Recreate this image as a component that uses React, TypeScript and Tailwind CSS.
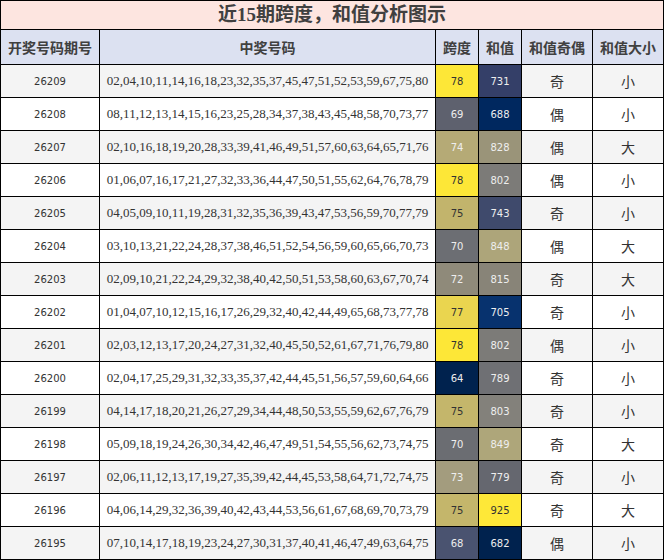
import React from "react";

type Row = {
  period: string;
  nums: string;
  span: number;
  spanCls: string;
  sum: number;
  sumCls: string;
  oe: string;
  bs: string;
};

const DARK = "text-[#333333]";
const LIGHT = "text-[#eeeeee]";

const rows: Row[] = [
  { period: "26209", nums: "02,04,10,11,14,16,18,23,32,35,37,45,47,51,52,53,59,67,75,80", span: 78, spanCls: "bg-[#fde737] text-[#333333]", sum: 731, sumCls: "bg-[#343f68] text-[#eeeeee]", oe: "奇", bs: "小" },
  { period: "26208", nums: "08,11,12,13,14,15,16,23,25,28,34,37,38,43,45,48,58,70,73,77", span: 69, spanCls: "bg-[#5e616e] text-[#eeeeee]", sum: 688, sumCls: "bg-[#00285f] text-[#eeeeee]", oe: "偶", bs: "小" },
  { period: "26207", nums: "02,10,16,18,19,20,28,33,39,41,46,49,51,57,60,63,64,65,71,76", span: 74, spanCls: "bg-[#b5aa76] text-[#eeeeee]", sum: 828, sumCls: "bg-[#9a9479] text-[#eeeeee]", oe: "偶", bs: "大" },
  { period: "26206", nums: "01,06,07,16,17,21,27,32,33,36,44,47,50,51,55,62,64,76,78,79", span: 78, spanCls: "bg-[#fde737] text-[#333333]", sum: 802, sumCls: "bg-[#7c7b78] text-[#eeeeee]", oe: "偶", bs: "小" },
  { period: "26205", nums: "04,05,09,10,11,19,28,31,32,35,36,39,43,47,53,56,59,70,77,79", span: 75, spanCls: "bg-[#c2b46c] text-[#333333]", sum: 743, sumCls: "bg-[#3f4a6c] text-[#eeeeee]", oe: "奇", bs: "小" },
  { period: "26204", nums: "03,10,13,21,22,24,28,37,38,46,51,52,54,56,59,60,65,66,70,73", span: 70, spanCls: "bg-[#6c6e73] text-[#eeeeee]", sum: 848, sumCls: "bg-[#ada57a] text-[#eeeeee]", oe: "偶", bs: "大" },
  { period: "26203", nums: "02,09,10,21,22,24,29,32,38,40,42,50,51,53,58,60,63,67,70,74", span: 72, spanCls: "bg-[#8f8a7a] text-[#eeeeee]", sum: 815, sumCls: "bg-[#888478] text-[#eeeeee]", oe: "奇", bs: "大" },
  { period: "26202", nums: "01,04,07,10,12,15,16,17,26,29,32,40,42,44,49,65,68,73,77,78", span: 77, spanCls: "bg-[#ead54f] text-[#333333]", sum: 705, sumCls: "bg-[#07326e] text-[#eeeeee]", oe: "奇", bs: "小" },
  { period: "26201", nums: "02,03,12,13,17,20,24,27,31,32,40,45,50,52,61,67,71,76,79,80", span: 78, spanCls: "bg-[#fde737] text-[#333333]", sum: 802, sumCls: "bg-[#7c7b78] text-[#eeeeee]", oe: "偶", bs: "小" },
  { period: "26200", nums: "02,04,17,25,29,31,32,33,35,37,42,44,45,51,56,57,59,60,64,66", span: 64, spanCls: "bg-[#00224e] text-[#eeeeee]", sum: 789, sumCls: "bg-[#6f7074] text-[#eeeeee]", oe: "奇", bs: "小" },
  { period: "26199", nums: "04,14,17,18,20,21,26,27,29,34,44,48,50,53,55,59,62,67,76,79", span: 75, spanCls: "bg-[#c4b66b] text-[#333333]", sum: 803, sumCls: "bg-[#83817b] text-[#eeeeee]", oe: "奇", bs: "小" },
  { period: "26198", nums: "05,09,18,19,24,26,30,34,42,46,47,49,51,54,55,56,62,73,74,75", span: 70, spanCls: "bg-[#6b6d72] text-[#eeeeee]", sum: 849, sumCls: "bg-[#aea67a] text-[#eeeeee]", oe: "奇", bs: "大" },
  { period: "26197", nums: "02,06,11,12,13,17,19,27,35,39,42,44,45,53,58,64,71,72,74,75", span: 73, spanCls: "bg-[#a39c7e] text-[#eeeeee]", sum: 779, sumCls: "bg-[#65676f] text-[#eeeeee]", oe: "奇", bs: "小" },
  { period: "26196", nums: "04,06,14,29,32,36,39,40,42,43,44,53,56,61,67,68,69,70,73,79", span: 75, spanCls: "bg-[#c4b66b] text-[#333333]", sum: 925, sumCls: "bg-[#fee838] text-[#333333]", oe: "奇", bs: "大" },
  { period: "26195", nums: "07,10,14,17,18,19,23,24,27,30,31,37,40,41,46,47,49,63,64,75", span: 68, spanCls: "bg-[#4a5370] text-[#eeeeee]", sum: 682, sumCls: "bg-[#00224e] text-[#eeeeee]", oe: "偶", bs: "小" },
];

void DARK;
void LIGHT;

const headers = ["开奖号码期号", "中奖号码", "跨度", "和值", "和值奇偶", "和值大小"];

export default function App() {
  return (
    <div className="w-[664px] h-[560px] bg-black p-px flex flex-col gap-px">
      <div className="h-[28px] bg-[#fde5e0] flex items-center justify-center text-[19px] font-bold text-[#404040] font-['Liberation_Serif','Noto_Sans_CJK_SC',serif]">
        近15期跨度，和值分析图示
      </div>
      <div className="grid grid-cols-[98px_335px_42px_42px_70px_70px] gap-px">
        {headers.map((h) => (
          <div
            key={h}
            className="h-[34px] bg-[#dce1f1] flex items-center justify-center text-[14px] font-bold text-[#404040] font-['Noto_Sans_CJK_SC',sans-serif]"
          >
            {h}
          </div>
        ))}
        {rows.map((r, i) => {
          const bg = i % 2 === 0 ? "bg-[#f4f4f4]" : "bg-white";
          return (
            <React.Fragment key={r.period}>
              <div className={`h-[32px] ${bg} flex items-center justify-center text-[10px] text-[#333333] font-['DejaVu_Sans',sans-serif]`}>
                {r.period}
              </div>
              <div className={`h-[32px] ${bg} flex items-center justify-center text-[13px] text-[#333333] font-['Liberation_Serif',serif]`}>
                {r.nums}
              </div>
              <div className={`h-[32px] ${r.spanCls} flex items-center justify-center text-[10px] font-['DejaVu_Sans',sans-serif]`}>
                {r.span}
              </div>
              <div className={`h-[32px] ${r.sumCls} flex items-center justify-center text-[10px] font-['DejaVu_Sans',sans-serif]`}>
                {r.sum}
              </div>
              <div className={`h-[32px] ${bg} flex items-center justify-center text-[14px] text-[#333333] font-['Noto_Sans_CJK_SC',sans-serif]`}>
                {r.oe}
              </div>
              <div className={`h-[32px] ${bg} flex items-center justify-center text-[14px] text-[#333333] font-['Noto_Sans_CJK_SC',sans-serif]`}>
                {r.bs}
              </div>
            </React.Fragment>
          );
        })}
      </div>
    </div>
  );
}
